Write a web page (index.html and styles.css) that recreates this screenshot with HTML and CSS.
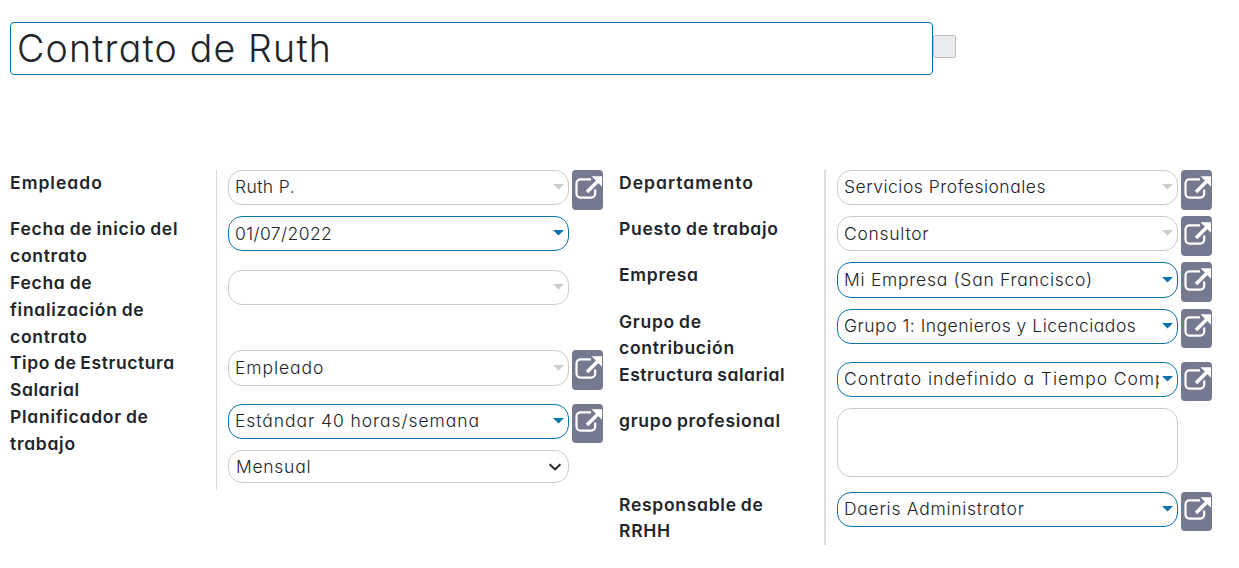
FILE: index.html
```
<!DOCTYPE html>
<html lang="es">
<head>
<meta charset="utf-8">
<title>Contrato de Ruth</title>
<link rel="stylesheet" href="styles.css">
</head>
<body>
<svg class="defs" width="0" height="0" aria-hidden="true">
  <symbol id="ext" viewBox="0 0 31 39">
    <path d="M19 8.400H8.500a4 4 0 0 0-4 4v10.200a4 4 0 0 0 4 4H19.200a4 4 0 0 0 4-4V18.500" fill="none" stroke="#fff" stroke-width="2.200"/>
    <path d="M15 21 26 10" fill="none" stroke="#fff" stroke-width="3.600"/>
    <path d="M19.500 5.300H30v10.500Z" fill="#fff"/>
  </symbol>
</svg>
<header class="title-row">
  <h1 class="title">Contrato de Ruth</h1>
  <span class="lang"></span>
</header>
<main class="sheet">
  <section class="group group-left">
    <div class="label wide">Empleado</div>
    <div class="cell"><div class="field narrow">Ruth P.<i class="caret"></i></div><button class="open"><svg><use href="#ext"/></svg></button></div>
    <div class="label">Fecha de inicio del<br>contrato</div>
    <div class="cell"><div class="field required narrow low">01/07/2022<i class="caret"></i></div></div>
    <div class="label">Fecha de<br>finalización de<br>contrato</div>
    <div class="cell"><div class="field"><i class="caret"></i></div></div>
    <div class="label tight">Tipo de Estructura<br>Salarial</div>
    <div class="cell"><div class="field tall wide">Empleado<i class="caret"></i></div><button class="open"><svg><use href="#ext"/></svg></button></div>
    <div class="label">Planificador de<br>trabajo</div>
    <div class="cell"><div class="field required wide">Estándar 40 horas/semana<i class="caret"></i></div><button class="open short"><svg><use href="#ext"/></svg></button></div>
    <div class="label"></div>
    <div class="cell"><div class="field select">Mensual<svg class="chevron" viewBox="0 0 12 8"><path d="M.6 1.200 6 6.400 11.400 1.200"/></svg></div></div>
  </section>
  <section class="group group-right">
    <div class="label wide">Departamento</div>
    <div class="cell"><div class="field tight">Servicios Profesionales<i class="caret"></i></div><button class="open"><svg><use href="#ext"/></svg></button></div>
    <div class="label">Puesto de trabajo</div>
    <div class="cell"><div class="field low">Consultor<i class="caret"></i></div><button class="open"><svg><use href="#ext"/></svg></button></div>
    <div class="label">Empresa</div>
    <div class="cell"><div class="field required tall">Mi Empresa (San Francisco)<i class="caret"></i></div><button class="open"><svg><use href="#ext"/></svg></button></div>
    <div class="label">Grupo de<br>contribución</div>
    <div class="cell"><div class="field required tight">Grupo 1: Ingenieros y Licenciados<i class="caret"></i></div><button class="open short"><svg><use href="#ext"/></svg></button></div>
    <div class="label tight">Estructura salarial</div>
    <div class="cell"><div class="field required wide"><span class="clip">Contrato indefinido a Tiempo Completo</span><i class="caret"></i></div><button class="open short"><svg><use href="#ext"/></svg></button></div>
    <div class="label">grupo profesional</div>
    <div class="cell"><div class="field area"></div></div>
    <div class="label">Responsable de<br>RRHH</div>
    <div class="cell"><div class="field required">Daeris Administrator<i class="caret"></i></div><button class="open short"><svg><use href="#ext"/></svg></button></div>
  </section>
</main>
</body>
</html>
```
FILE: styles.css
```
* { box-sizing: border-box; }
body {
  margin: 0;
  padding: 22px 10px 0;
  background: #fff;
  color: #212529;
  font-family: Inter, "Open Sans", sans-serif;
  font-feature-settings: "cv11";
  overflow: hidden;
}
.defs { display: block; height: 0; }
.title-row { display: flex; height: 148px; }
.title {
  width: 923px;
  height: 53px;
  margin: 0;
  padding: 0 6px;
  border: 1px solid #0874ad;
  border-radius: 4px;
  font-size: 37.500px;
  font-weight: 340;
  line-height: 51px;
  letter-spacing: 1.200px;
  white-space: nowrap;
}
.lang {
  width: 23px;
  height: 23px;
  margin-top: 13px;
  border: 1px solid #bdbdbd;
  border-radius: 2px;
  background: #e9ecef;
}
.sheet { display: flex; gap: 16px; align-items: flex-start; }
.group { display: grid; }
.group-left {
  width: 593px;
  grid-template-columns: 206px 387px;
  grid-template-rows: 46px 54px 80px 54px 46px 40px;
}
.group-right {
  width: 600px;
  grid-template-columns: 205px 395px;
  grid-template-rows: 46px 46px 47px 53px 46px 84px 53px;
}
.label {
  font-size: 17.500px;
  font-weight: 600;
  line-height: 26.800px;
  letter-spacing: .720px;
  word-spacing: -1px;
  white-space: nowrap;
}
.group-right .label { line-height: 26.400px; }
.label.wide { letter-spacing: 1.030px; }
.label.tight { letter-spacing: .570px; }
.cell {
  display: flex;
  align-items: flex-start;
  gap: 3px;
  padding-left: 11px;
  border-left: 1px solid #d9dadb;
}
.group-right .cell { border-left: 2px solid #dcdcdc; }
.field {
  position: relative;
  width: 341px;
  height: 35px;
  padding: 0 6px;
  border: 1px solid #ccc;
  border-radius: 14px;
  font-size: 17.500px;
  font-weight: 320;
  line-height: 32px;
  letter-spacing: .720px;
  white-space: nowrap;
}
.field.wide { letter-spacing: .930px; }
.field.tight { letter-spacing: .500px; }
.field.narrow { letter-spacing: .400px; }
.field.low { line-height: 34px; }
.field.tall { height: 36px; line-height: 33px; }
.required { border-color: #0874ad; }
.area { height: 69px; }
.select { height: 33px; padding-left: 7px; line-height: 32px; }
.clip { display: block; width: 315px; overflow: hidden; }
.caret {
  position: absolute;
  top: 13px;
  right: 4px;
  width: 11px;
  height: 5.500px;
  background: #ccc;
  clip-path: polygon(0 0, 100% 0, 50% 100%);
}
.required .caret { background: #0874ad; }
.tall .caret { top: 14px; }
.chevron {
  position: absolute;
  top: 12px;
  right: 7px;
  width: 12px;
  height: 8px;
  fill: none;
  stroke: #212529;
  stroke-width: 2;
}
.open {
  width: 31px;
  height: 40px;
  padding: 0;
  border: 0;
  border-radius: 4px;
  background: #757990;
}
.open.short { height: 39px; }
.open svg { display: block; width: 31px; height: 39px; }
```
